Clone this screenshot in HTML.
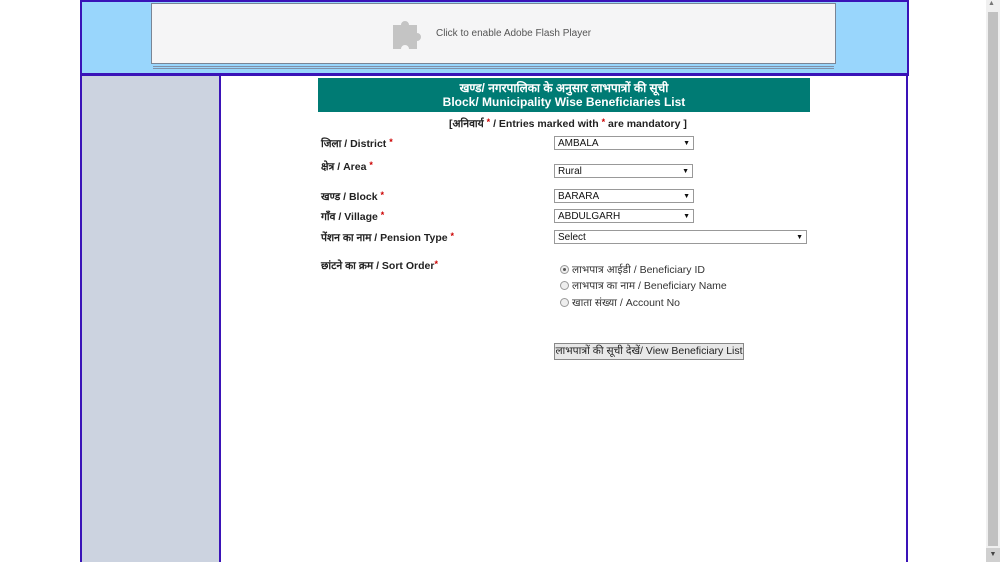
<!DOCTYPE html>
<html><head><meta charset="utf-8"><style>
*{margin:0;padding:0;box-sizing:border-box}
body{width:1000px;height:562px;background:#fff;position:relative;overflow:hidden;font-family:"Liberation Sans","Noto Sans CJK SC",sans-serif;font-size:11px;color:#333}
.a{position:absolute;white-space:nowrap}
.hdr{left:80px;top:0;width:829px;height:76px;background:#99d6fc;border:2px solid #3a13b8;border-bottom:3px solid #3a13b8}
.flash{left:151px;top:3px;width:685px;height:61px;background:#f5f5f6;border:1px solid #7a8595}
.ln{left:153px;width:681px;height:1px;background:#8090a8}
.side{left:80px;top:76px;width:141px;height:486px;background:#ccd3e0;border-left:2px solid #3a13b8;border-right:2px solid #3a13b8}
.rb{left:906px;top:76px;width:2px;height:486px;background:#3a13b8}
.title{left:318px;top:78px;width:492px;height:34px;background:#007b74;color:#fff;font-weight:bold;text-align:center;font-size:12px;line-height:14px;padding-top:3px}
.lbl{left:321px;font-weight:bold;color:#222;font-size:10.5px}
.st{color:#c00;font-size:9px;vertical-align:top}
.sel{left:554px;height:14px;border:1px solid #999;background:#fff;font-size:10px;line-height:13px;padding-left:3px;color:#111}
.sel:after{content:"▼";position:absolute;right:3px;top:0;font-size:7px}
.rad{left:560px;font-size:10.5px;color:#333}
.rad i{display:inline-block;width:9px;height:9px;border:1px solid #999;border-radius:50%;background:#eee;margin-right:3px;vertical-align:-1px;position:relative}
.btn{left:554px;top:343px;width:190px;height:17px;border:1px solid #888;background:#e8e8e8;font-size:10.5px;line-height:15px;text-align:center;color:#222}
.sb{left:986px;top:0;width:14px;height:562px;background:#f0f0f0}
</style></head><body>
<div class="a hdr"></div>
<div class="a flash"></div>
<div class="a ln" style="top:66px"></div>
<div class="a ln" style="top:68px"></div>
<svg class="a" style="left:391px;top:17px" width="34" height="32" viewBox="0 0 34 32"><path d="M2 8h8a4 4 0 1 1 8 0h8v8a4 4 0 1 1 0 8v8h-8a4 4 0 1 0-8 0H2z" fill="#c4c4c4"/></svg>
<div class="a" style="left:436px;top:28px;font-size:10px;color:#555">Click to enable Adobe Flash Player</div>
<div class="a side"></div>
<div class="a rb"></div>
<div class="a title">खण्ड/ नगरपालिका के अनुसार लाभपात्रों की सूची<br>Block/ Municipality Wise Beneficiaries List</div>
<div class="a" style="left:449px;top:117px;font-weight:bold;color:#222;font-size:10.5px">[अनिवार्य <span class="st">*</span> / Entries marked with <span class="st">*</span> are mandatory ]</div>
<div class="a lbl" style="top:137px">जिला / District <span class="st">*</span></div>
<div class="a lbl" style="top:160px">क्षेत्र / Area <span class="st">*</span></div>
<div class="a lbl" style="top:190px">खण्ड / Block <span class="st">*</span></div>
<div class="a lbl" style="top:210px">गाँव / Village <span class="st">*</span></div>
<div class="a lbl" style="top:231px">पेंशन का नाम / Pension Type <span class="st">*</span></div>
<div class="a lbl" style="top:259px">छांटने का क्रम / Sort Order<span class="st">*</span></div>
<div class="a sel" style="top:136px;width:140px">AMBALA</div>
<div class="a sel" style="top:164px;width:139px">Rural</div>
<div class="a sel" style="top:189px;width:140px">BARARA</div>
<div class="a sel" style="top:209px;width:140px">ABDULGARH</div>
<div class="a sel" style="top:230px;width:253px">Select</div>
<div class="a rad" style="top:263px"><i><b style="position:absolute;left:2px;top:2px;width:3px;height:3px;border-radius:50%;background:#555"></b></i>लाभपात्र आईडी / Beneficiary ID</div>
<div class="a rad" style="top:279px"><i></i>लाभपात्र का नाम / Beneficiary Name</div>
<div class="a rad" style="top:296px"><i></i>खाता संख्या / Account No</div>
<div class="a btn">लाभपात्रों की सूची देखें/ View Beneficiary List</div>
<div class="a sb"></div>
<div class="a" style="left:988px;top:12px;width:10px;height:534px;background:#c1c1c1"></div>
<div class="a" style="left:988px;top:0;font-size:7px;color:#777">▲</div>
<div class="a" style="left:986px;top:548px;width:14px;height:14px;background:#d0d0d0;font-size:7px;text-align:center;line-height:14px;color:#444">▼</div>
</body></html>
